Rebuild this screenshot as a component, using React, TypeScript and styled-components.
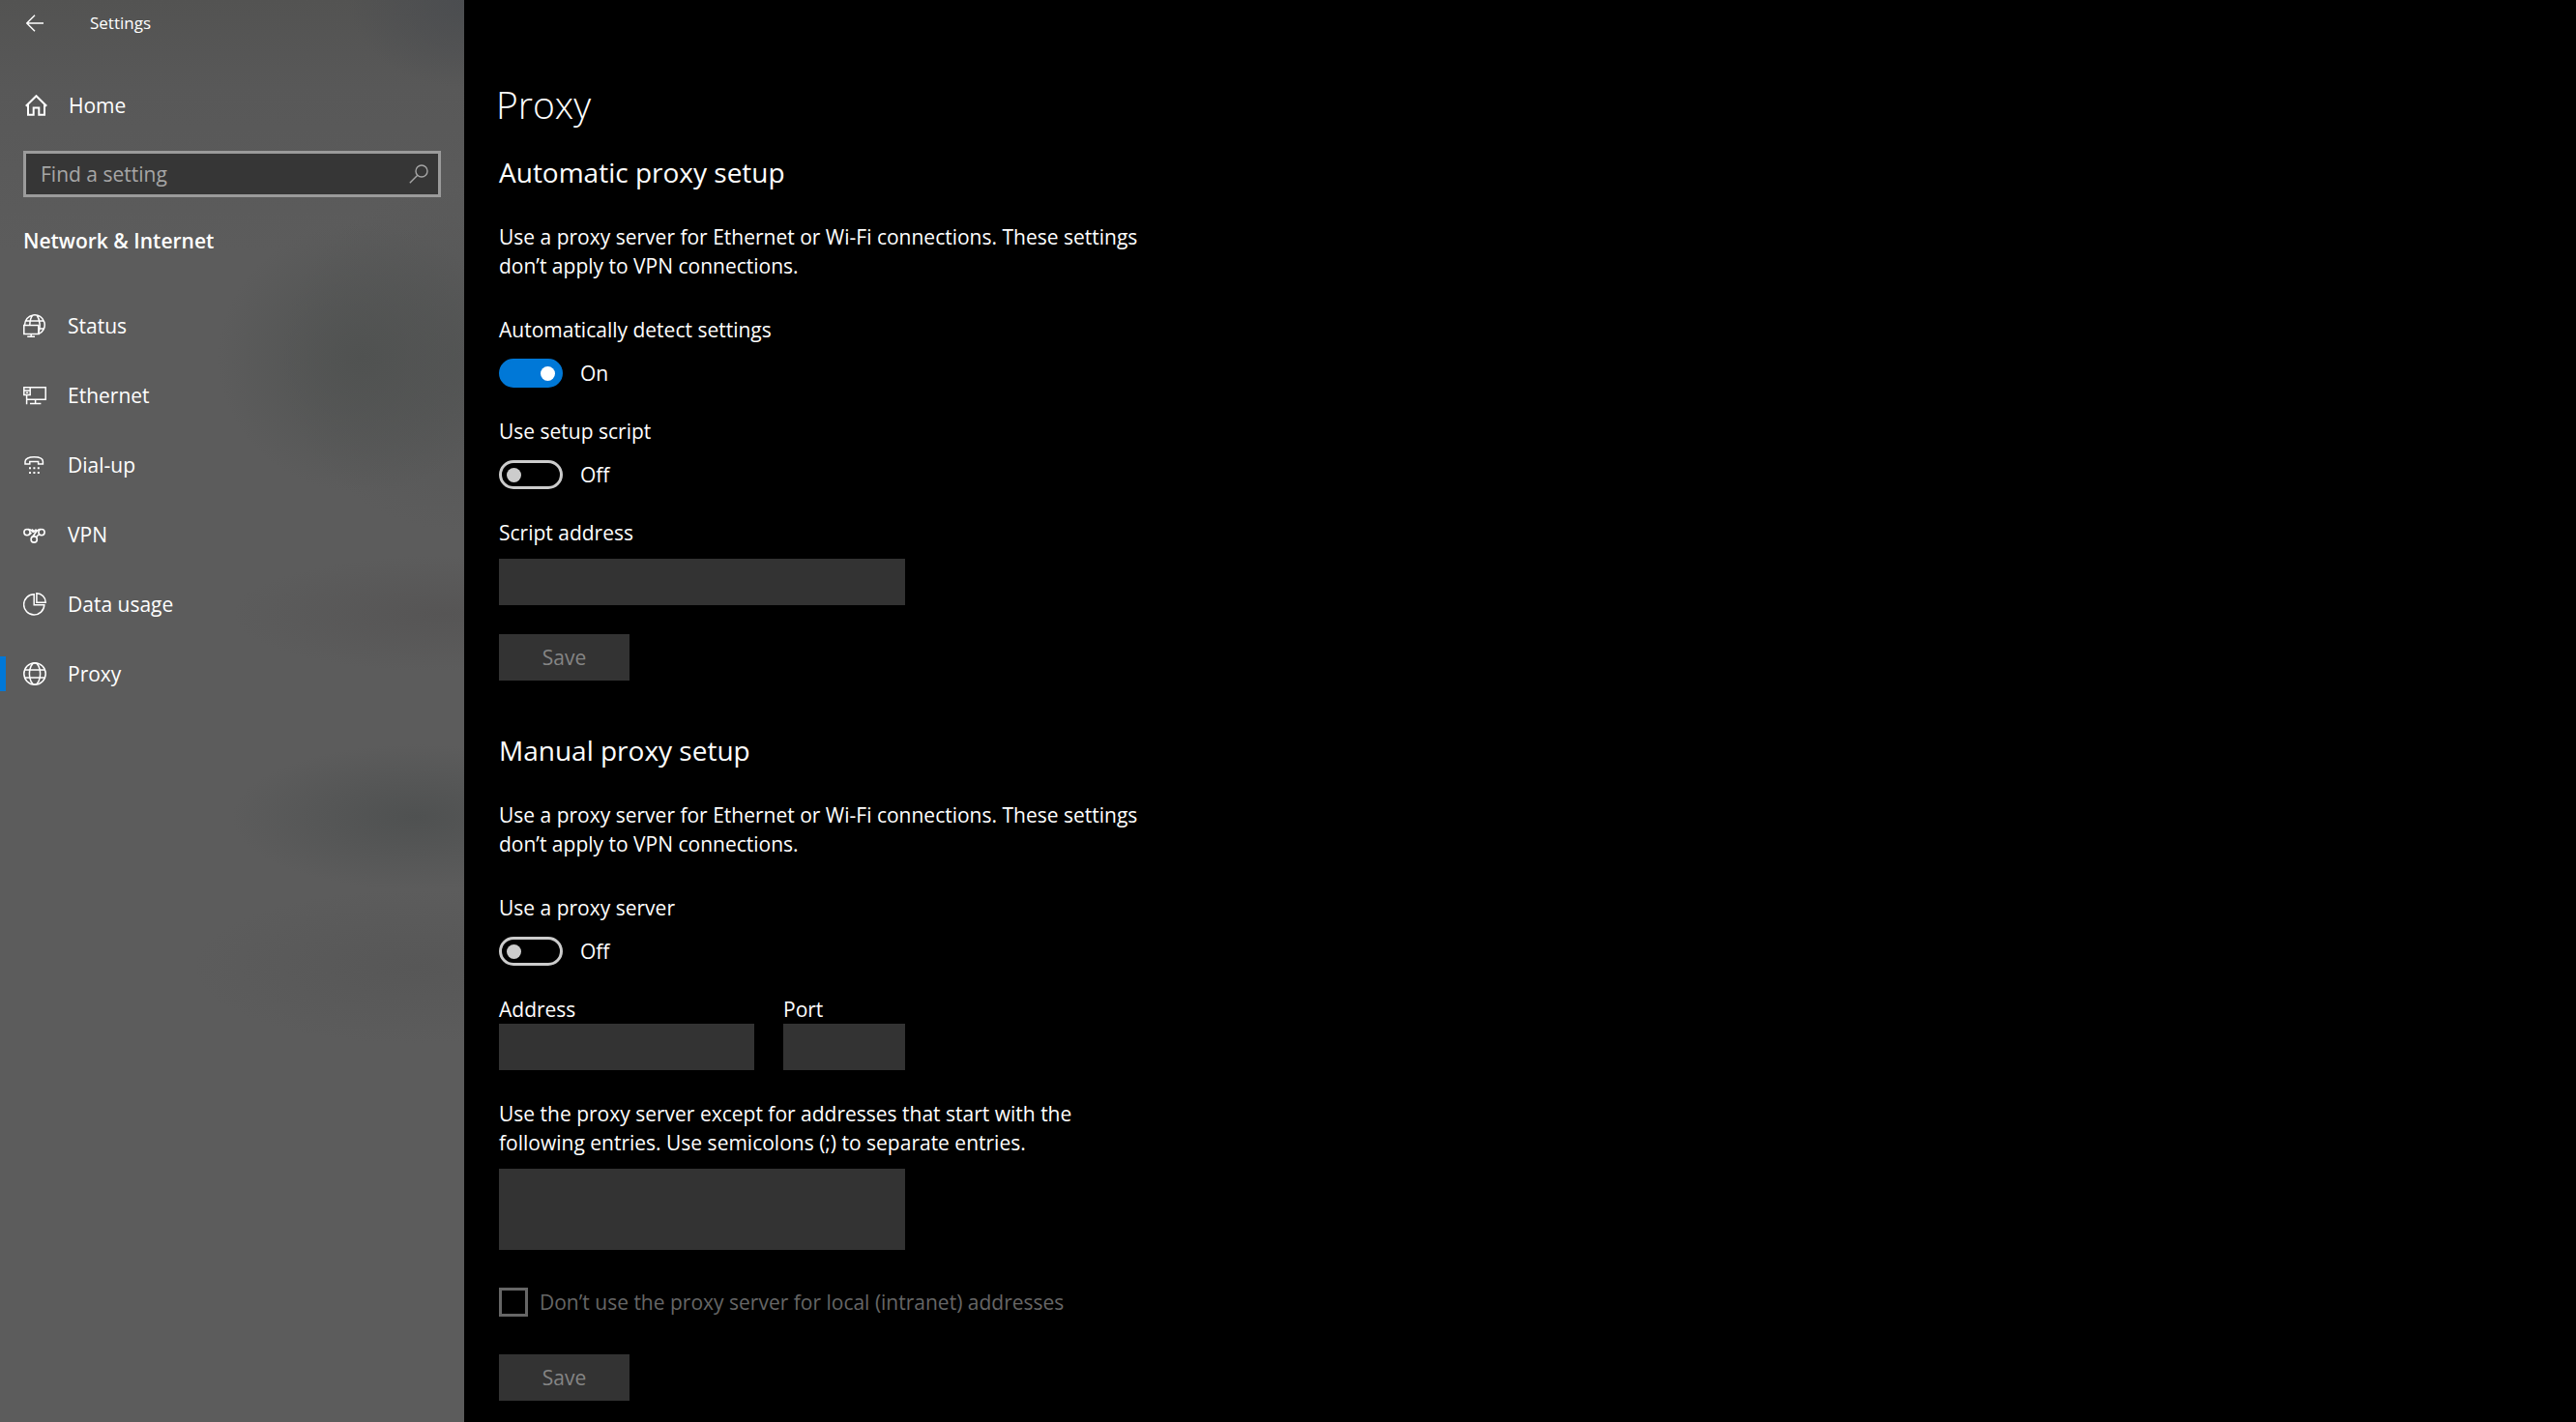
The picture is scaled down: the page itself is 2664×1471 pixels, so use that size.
import React, { useId, useState } from "react";
import styled, { createGlobalStyle } from "styled-components";

const GlobalStyle = createGlobalStyle`
  *, *::before, *::after { box-sizing: border-box; }
  body {
    margin: 0;
    background: #000;
    color: #fff;
    font-family: "Open Sans", "Noto Sans", sans-serif;
    font-size: 21px;
    line-height: 30px;
  }
  button, input, textarea { font: inherit; color: inherit; }
`;

const Window = styled.div`
  display: grid;
  grid-template-columns: 480px minmax(0, 1fr);
  min-height: 100vh;
`;

const Sidebar = styled.aside`
  display: flex;
  flex-direction: column;
  background:
    radial-gradient(ellipse 120px 90px at 100% 0, #4b4d50 0%, #4b4d5000 100%),
    radial-gradient(ellipse 150px 140px at 375px 370px, #505251 0%, #50525199 40%, #50525100 100%),
    radial-gradient(ellipse 190px 180px at 480px 370px, #545555 0%, #54555500 100%),
    radial-gradient(ellipse 220px 60px at 460px 635px, #565555 0%, #56555500 100%),
    radial-gradient(ellipse 190px 75px at 430px 845px, #4f5151 0%, #4f515180 50%, #4f515100 100%),
    radial-gradient(ellipse 230px 80px at 430px 1000px, #575757 0%, #57575700 100%),
    linear-gradient(#535352 0, #585858 90px, #5c5c5c 260px, #5c5c5c 100%);
`;

const TitleBar = styled.header`
  display: flex;
  align-items: center;
  gap: 48px;
  height: 48px;
  padding-left: 27px;
  font-size: 17px;
  line-height: 24px;
`;

const IconButton = styled.button`
  display: flex;
  padding: 0;
  border: 0;
  background: none;
`;

const HomeLink = styled.a`
  display: flex;
  align-items: center;
  gap: 22px;
  height: 72px;
  margin: 25px 0 11px;
  padding: 0 26px;
  color: #fff;
  text-decoration: none;
`;

const SearchBox = styled.label`
  display: flex;
  align-items: center;
  height: 48px;
  margin: 0 24px;
  padding: 0 10px 0 15px;
  border: 3px solid #9b9b9b;
  background: #363636;
  color: #a6a6a6;
`;

const SearchInput = styled.input`
  flex: 1;
  min-width: 0;
  padding: 0;
  border: 0;
  outline: 0;
  background: none;
  &::placeholder { color: #a6a6a6; opacity: 1; }
`;

const SidebarHeading = styled.h2`
  margin: 30px 24px 37px;
  font-size: 21px;
  line-height: 30px;
  font-weight: 600;
`;

const NavList = styled.ul`
  margin: 0;
  padding: 0;
  list-style: none;
`;

const NavLink = styled.a<{ $active?: boolean }>`
  display: grid;
  grid-template-columns: 24px 24px 1fr;
  align-items: center;
  height: 72px;
  color: #fff;
  text-decoration: none;
  &::before {
    content: "";
    width: 6px;
    height: 36px;
    background: ${(p) => (p.$active ? "#0078d7" : "transparent")};
  }
`;

const NavText = styled.span`
  padding-left: 22px;
`;

const Main = styled.main`
  padding: 81px 36px 24px;
`;

const Title = styled.h1`
  margin: 0 0 25px -3px;
  font-size: 39px;
  line-height: 54px;
  font-weight: 300;
`;

const Section = styled.section`
  display: flex;
  flex-direction: column;
  align-items: flex-start;
  max-width: 675px;
  & + & { margin-top: 54px; }
`;

const SectionTitle = styled.h2`
  margin: 0 0 34px;
  font-size: 28px;
  line-height: 36px;
  font-weight: 400;
`;

const Description = styled.p`
  margin: 0 0 36px;
`;

const Group = styled.div<{ $gap: number; $width?: string }>`
  display: flex;
  flex-direction: column;
  gap: ${(p) => p.$gap}px;
  width: ${(p) => p.$width || "auto"};
  margin-bottom: 30px;
`;

const SwitchRow = styled.div`
  display: flex;
  align-items: center;
  gap: 18px;
`;

const Switch = styled.input`
  appearance: none;
  display: flex;
  width: 66px;
  height: 30px;
  margin: 0;
  padding: 5px 5px 4px;
  border: 3px solid #ccc;
  border-radius: 15px;
  &::before {
    content: "";
    width: 15px;
    height: 15px;
    border-radius: 50%;
    background: #ccc;
  }
  &:checked {
    justify-content: flex-end;
    border-color: #0078d7;
    background: #0078d7;
  }
  &:checked::before { background: #fff; }
`;

const FieldRow = styled.div`
  display: grid;
  grid-template-columns: 264px 126px;
  gap: 30px;
`;

const TextField = styled.input`
  width: 100%;
  height: 48px;
  padding: 0 12px;
  border: 0;
  background: #333;
`;

const TextArea = styled.textarea`
  display: block;
  width: 420px;
  height: 84px;
  padding: 9px 12px;
  border: 0;
  background: #333;
  resize: none;
`;

const CheckLabel = styled.label`
  display: flex;
  align-items: center;
  gap: 12px;
  margin: 9px 0 39px;
  color: #666;
`;

const CheckBox = styled.input`
  appearance: none;
  width: 30px;
  height: 30px;
  margin: 0;
  border: 3px solid #666;
`;

const SaveButton = styled.button`
  width: 135px;
  height: 48px;
  padding: 0;
  border: 0;
  background: #333;
  color: #858585;
`;

const Svg = ({ size = 24, width = 2, children }: { size?: number; width?: number; children: React.ReactNode }) => (
  <svg width={size} height={size} viewBox={`0 0 ${size} ${size}`} fill="none" stroke="currentColor" strokeWidth={width} aria-hidden="true">
    {children}
  </svg>
);

const BackIcon = () => (
  <Svg size={18} width={1.4}>
    <path d="M18 9H1M9 .8L.8 9L9 17.2" />
  </Svg>
);

const HomeIcon = () => (
  <Svg size={23}>
    <path d="M.8 11.8L11.5 1.2L22.2 11.8M3 10V20.8H8.7V13.5H14.3V20.8H20V10" />
  </Svg>
);

const SearchIcon = () => (
  <Svg size={20} width={1.4}>
    <circle cx="13" cy="7" r="6" />
    <path d="M8.8 11.2L.8 19.2" />
  </Svg>
);

const StatusIcon = () => (
  <Svg width={1.5}>
    <path d="M.8 11.4H15.8V20.4H.8ZM8.2 20.4V23M4.2 23.2H12" />
    <path d="M1.6 11.4A10.3 10.3 0 1 1 15.8 20.6M2.6 7H21M15.8 15H21.6M6.8 11.4C6.9 7 7.8 3.4 9.6 1.2M14.2 1.2C17.8 6 17.8 14 15.8 19.6" />
  </Svg>
);

const EthernetIcon = () => (
  <Svg width={1.5}>
    <path d="M7.2 3.8H23.2V16.3H3.6M.8 3.8H7.2V11.6H.8ZM.8 6.9H7.2M3.6 11.6V21.2M12.6 16.3V20.4M7 20.6H18.4M2.8 9.2H5.2" />
  </Svg>
);

const DialUpIcon = () => (
  <Svg width={1.5}>
    <path d="M2 11V8.6C2 5.4 6 3.8 11.2 3.8S20.4 5.4 20.4 8.6V11H15.6V8.4H6.8V11Z" />
    <path d="M6 15.2H8M10.4 15.2H12.4M14.8 15.2H16.8M6 20H8M10.4 20H12.4M14.8 20H16.8" strokeWidth={2} />
  </Svg>
);

const VpnIcon = () => (
  <Svg width={1.6}>
    <circle cx="4" cy="9.6" r="3.1" />
    <circle cx="19" cy="9.6" r="3.1" />
    <circle cx="11.2" cy="17" r="3.1" />
    <path d="M5 6.6C7.6 6.2 8.6 7.4 10.6 9.6M9 6.6L11.2 8.8L13.6 6.6M18 6.6C13 6 12.6 12.6 8.8 14.8M6.6 11.6L8.6 10.2M17 12.2C14.6 12 14.4 13.6 13.6 14.8" />
  </Svg>
);

const DataUsageIcon = () => (
  <Svg width={1.5}>
    <path d="M11.2 1.8A10.6 10.6 0 1 0 21.8 12.8H11.2Z" />
    <path d="M13.9.8A9.4 9.4 0 0 1 23.2 10.2H13.9Z" />
  </Svg>
);

const GlobeIcon = () => (
  <Svg width={1.5}>
    <circle cx="12" cy="12" r="11.2" />
    <ellipse cx="12" cy="12" rx="5.6" ry="11.2" />
    <path d="M1.8 8H22.2M1.8 16H22.2" />
  </Svg>
);

const NAV_ITEMS = [
  { label: "Status", Icon: StatusIcon },
  { label: "Ethernet", Icon: EthernetIcon },
  { label: "Dial-up", Icon: DialUpIcon },
  { label: "VPN", Icon: VpnIcon },
  { label: "Data usage", Icon: DataUsageIcon },
  { label: "Proxy", Icon: GlobeIcon, active: true },
];

function SwitchField({ label, defaultOn = false }: { label: string; defaultOn?: boolean }) {
  const id = useId();
  const [on, setOn] = useState(defaultOn);
  return (
    <Group $gap={15}>
      <label htmlFor={id}>{label}</label>
      <SwitchRow>
        <Switch id={id} type="checkbox" role="switch" checked={on} onChange={(e) => setOn(e.target.checked)} />
        <span>{on ? "On" : "Off"}</span>
      </SwitchRow>
    </Group>
  );
}

export default function App() {
  return (
    <>
      <GlobalStyle />
      <Window>
        <Sidebar>
          <TitleBar>
            <IconButton type="button" aria-label="Back">
              <BackIcon />
            </IconButton>
            <span>Settings</span>
          </TitleBar>
          <HomeLink href="#home">
            <HomeIcon />
            Home
          </HomeLink>
          <SearchBox>
            <SearchInput type="text" placeholder="Find a setting" aria-label="Find a setting" />
            <SearchIcon />
          </SearchBox>
          <SidebarHeading>Network &amp; Internet</SidebarHeading>
          <nav>
            <NavList>
              {NAV_ITEMS.map(({ label, Icon, active }) => (
                <li key={label}>
                  <NavLink href="#" $active={active} aria-current={active ? "page" : undefined}>
                    <Icon />
                    <NavText>{label}</NavText>
                  </NavLink>
                </li>
              ))}
            </NavList>
          </nav>
        </Sidebar>
        <Main>
          <Title>Proxy</Title>
          <Section>
            <SectionTitle>Automatic proxy setup</SectionTitle>
            <Description>
              Use a proxy server for Ethernet or Wi-Fi connections. These settings don’t apply to VPN connections.
            </Description>
            <SwitchField label="Automatically detect settings" defaultOn />
            <SwitchField label="Use setup script" />
            <Group $gap={12} $width="420px">
              <label htmlFor="script-address">Script address</label>
              <TextField id="script-address" type="text" disabled />
            </Group>
            <SaveButton type="button" disabled>Save</SaveButton>
          </Section>
          <Section>
            <SectionTitle>Manual proxy setup</SectionTitle>
            <Description>
              Use a proxy server for Ethernet or Wi-Fi connections. These settings don’t apply to VPN connections.
            </Description>
            <SwitchField label="Use a proxy server" />
            <FieldRow>
              <Group $gap={0}>
                <label htmlFor="address">Address</label>
                <TextField id="address" type="text" disabled />
              </Group>
              <Group $gap={0}>
                <label htmlFor="port">Port</label>
                <TextField id="port" type="text" disabled />
              </Group>
            </FieldRow>
            <Group $gap={12}>
              <label htmlFor="exceptions">
                Use the proxy server except for addresses that start with the following entries. Use semicolons (;) to
                separate entries.
              </label>
              <TextArea id="exceptions" disabled />
            </Group>
            <CheckLabel>
              <CheckBox type="checkbox" disabled />
              Don’t use the proxy server for local (intranet) addresses
            </CheckLabel>
            <SaveButton type="button" disabled>Save</SaveButton>
          </Section>
        </Main>
      </Window>
    </>
  );
}
